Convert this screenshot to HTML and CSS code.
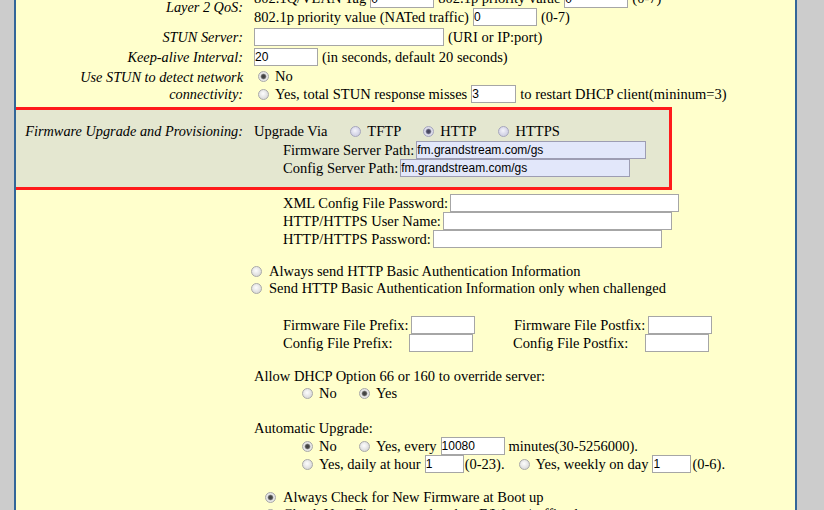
FILE: index.html
```html
<!DOCTYPE html>
<html lang="en">
<head>
<meta charset="utf-8">
<title>Advanced Settings</title>
<link rel="stylesheet" href="styles.css">
</head>
<body>
<div class="page">
  <div class="scroll">
    <div class="row">
      <div class="lbl">Layer 2 QoS:</div>
      <div class="val">
        <div class="line h19"><span>802.1Q/VLAN Tag</span><input class="txt w64" value="0"><span class="ml18">802.1p priority value</span><input class="txt w64" value="0"><span>(0-7)</span></div>
        <div class="line"><span>802.1p priority value (NATed traffic)</span><input class="txt w64" value="0"><span>(0-7)</span></div>
      </div>
    </div>
    <div class="row gap">
      <div class="lbl">STUN Server:</div>
      <div class="val">
        <div class="line"><input class="txt w190 first" value=""><span>(URI or IP:port)</span></div>
      </div>
    </div>
    <div class="row gap">
      <div class="lbl">Keep-alive Interval:</div>
      <div class="val">
        <div class="line"><input class="txt w64 first" value="20"><span>(in seconds, default 20 seconds)</span></div>
      </div>
    </div>
    <div class="row gap">
      <div class="lbl">Use STUN to detect network connectivity:</div>
      <div class="val">
        <div class="line h17"><input type="radio" class="radio ml4" name="stun" checked><span>No</span></div>
        <div class="line"><input type="radio" class="radio ml4" name="stun"><span>Yes, total STUN response misses</span><input class="txt w45" value="3"><span>to restart DHCP client(mininum=3)</span></div>
      </div>
    </div>

    <div class="row box">
      <div class="lbl top">Firmware Upgrade and Provisioning:</div>
      <div class="val">
        <div class="line h19"><span>Upgrade Via</span><input type="radio" class="radio ml23" name="via"><span>TFTP</span><input type="radio" class="radio ml22" name="via" checked><span>HTTP</span><input type="radio" class="radio ml22" name="via"><span>HTTPS</span></div>
        <div class="line ind29 path"><span>Firmware Server Path:</span><input class="txt w230 fill" value="fm.grandstream.com/gs"></div>
        <div class="line ind29 path"><span>Config Server Path:</span><input class="txt w230 fill" value="fm.grandstream.com/gs"></div>
      </div>
    </div>

    <div class="lower">
      <div class="line ind29 path"><span>XML Config File Password:</span><input class="txt w229" value=""></div>
      <div class="line ind29 path"><span>HTTP/HTTPS User Name:</span><input class="txt w229" value=""></div>
      <div class="line ind29 path"><span>HTTP/HTTPS Password:</span><input class="txt w229" value=""></div>

      <div class="sec-auth">
        <div class="line h17 auth"><input type="radio" class="radio wide" name="auth"><span>Always send HTTP Basic Authentication Information</span></div>
        <div class="line h17 auth"><input type="radio" class="radio wide" name="auth"><span>Send HTTP Basic Authentication Information only when challenged</span></div>
      </div>

      <div class="sec-fix">
        <div class="line ind29"><span class="pf-a">Firmware File Prefix:</span><input class="txt w64 first" value=""><span class="sf-a">Firmware File Postfix:</span><input class="txt w64 first" value=""></div>
        <div class="line ind29"><span class="pf-b">Config File Prefix:</span><input class="txt w64 first" value=""><span class="sf-b">Config File Postfix:</span><input class="txt w64 first" value=""></div>
      </div>

      <div class="sec-dhcp">
        <div class="line h17"><span>Allow DHCP Option 66 or 160 to override server:</span></div>
        <div class="line h17 ind48"><span class="opt-no"><input type="radio" class="radio" name="dhcp"><span>No</span></span><input type="radio" class="radio" name="dhcp" checked><span>Yes</span></div>
      </div>

      <div class="sec-auto">
        <div class="line"><span>Automatic Upgrade:</span></div>
        <div class="line ind48"><span class="opt-no"><input type="radio" class="radio" name="auto" checked><span>No</span></span><input type="radio" class="radio" name="auto"><span>Yes, every</span><input class="txt w64" value="10080"><span>minutes(30-5256000).</span></div>
        <div class="line ind48"><input type="radio" class="radio" name="auto"><span>Yes, daily at hour</span><input class="txt w39 tight" value="1"><span>(0-23).</span><input type="radio" class="radio ml14" name="auto"><span>Yes, weekly on day</span><input class="txt w39 tight" value="1"><span>(0-6).</span></div>
      </div>

      <div class="sec-boot">
        <div class="line h17 ind11"><input type="radio" class="radio wide" name="boot" checked><span>Always Check for New Firmware at Boot up</span></div>
        <div class="line h17 ind11"><input type="radio" class="radio wide" name="boot"><span>Check New Firmware only when F/W pre/suffix changes</span></div>
      </div>
    </div>
  </div>
</div>
</body>
</html>
```

FILE: styles.css
```css
html, body {
  margin: 0;
  padding: 0;
}

body {
  background: #cccccc;
  font-family: "Liberation Serif", "Times New Roman", serif;
  font-size: 14.5px;
  color: #000;
  height: 510px;
  overflow: hidden;
}

.page {
  margin-left: 14px;
  width: 779px;
  height: 510px;
  border-left: 2px solid #336699;
  border-right: 2px solid #336699;
  background: #ffffcc;
  overflow: hidden;
}

.scroll {
  margin-top: -11px;
}

.row {
  display: flex;
}

.row.gap {
  margin-top: 2px;
}

.lbl {
  flex: 0 0 232px;
  box-sizing: border-box;
  padding-right: 5px;
  text-align: right;
  font-style: italic;
  font-size: 14.3px;
  line-height: 17px;
  display: flex;
  flex-direction: column;
  justify-content: center;
}

.lbl.top {
  justify-content: flex-start;
  padding-top: 1px;
}

.val {
  padding-left: 6px;
}

.line {
  display: flex;
  align-items: center;
  height: 18px;
  white-space: nowrap;
}

.line.h17 { height: 17px; }
.line.h19 { height: 19px; }

.ind11 { margin-left: 11px; }
.ind29 { margin-left: 29px; }
.ind48 { margin-left: 48px; }

.ml4 { margin-left: 4px; }
.ml14 { margin-left: 14px; }
.ml18 { margin-left: 18px; }
.ml22 { margin-left: 22px; }
.ml23 { margin-left: 23px; }

/* text inputs */
.txt {
  box-sizing: border-box;
  height: 18px;
  margin: 0 0 0 4px;
  padding: 0;
  border: 1px solid #a6a6a6;
  background: #fff;
  font-family: "Liberation Sans", Arial, sans-serif;
  font-size: 12px;
  color: #000;
  outline: none;
  flex: none;
}

.txt.first { margin-left: 0; }
.path .txt { margin-left: 2px; }
.txt + span { margin-left: 4px; }
.txt.tight + span { margin-left: 1px; }

.w39 { width: 39px; }
.w45 { width: 45px; }
.w64 { width: 64px; }
.w190 { width: 190px; }
.w229 { width: 229px; }
.w230 { width: 230px; }

.txt.fill {
  background: #e2e7fa;
  border-color: #9d9db3;
}

/* radios */
.radio {
  -webkit-appearance: none;
  appearance: none;
  flex: none;
  box-sizing: border-box;
  width: 11px;
  height: 11px;
  margin-top: 0;
  margin-bottom: 0;
  margin-right: 6px;
  border: 1px solid #a9a9a9;
  border-radius: 50%;
  background: radial-gradient(circle at 45% 40%, #fdfdfd 0, #e8e8e8 45%, #cdcdcd 100%);
}

.radio:not(.ml4):not(.ml14):not(.ml22):not(.ml23) {
  margin-left: 0;
}

.radio.wide { margin-right: 7px; }

.radio:checked {
  background: radial-gradient(circle, #3e3e3e 0, #4a4a4a 1.8px, #9a9a9a 2.6px, #ececec 3.3px, #d2d2d2 100%);
}

.box .radio {
  border-color: #a6a6bd;
  background: radial-gradient(circle at 45% 40%, #f4f4fb 0, #dcdcec 45%, #c6c7dc 100%);
}

.box .radio:checked {
  background: radial-gradient(circle, #44445a 0, #50506a 1.8px, #9a9ab0 2.6px, #e2e2ef 3.3px, #c6c7dc 100%);
}

/* highlighted provisioning block */
.box {
  width: 653px;
  margin-top: 7px;
  padding: 12px 0 10px;
  background: #e4e7d0;
  outline: 3px solid #ff1b1b;
}

.lower {
  margin-top: 7px;
  margin-left: 238px;
}

.auth { margin-left: -3px; }

.sec-auth { margin-top: 15px; }
.sec-fix { margin-top: 19px; }
.sec-dhcp { margin-top: 16px; }
.sec-auto { margin-top: 17px; }
.sec-boot { margin-top: 16px; }

.pf-a { width: 128px; }
.pf-b { width: 126px; }
.sf-a { width: 134px; margin-left: 39px; }
.sf-b { width: 132px; margin-left: 40px; }
.txt + .sf-a { margin-left: 39px; }
.txt + .sf-b { margin-left: 40px; }

.opt-no {
  display: flex;
  align-items: center;
  width: 57px;
}
```
